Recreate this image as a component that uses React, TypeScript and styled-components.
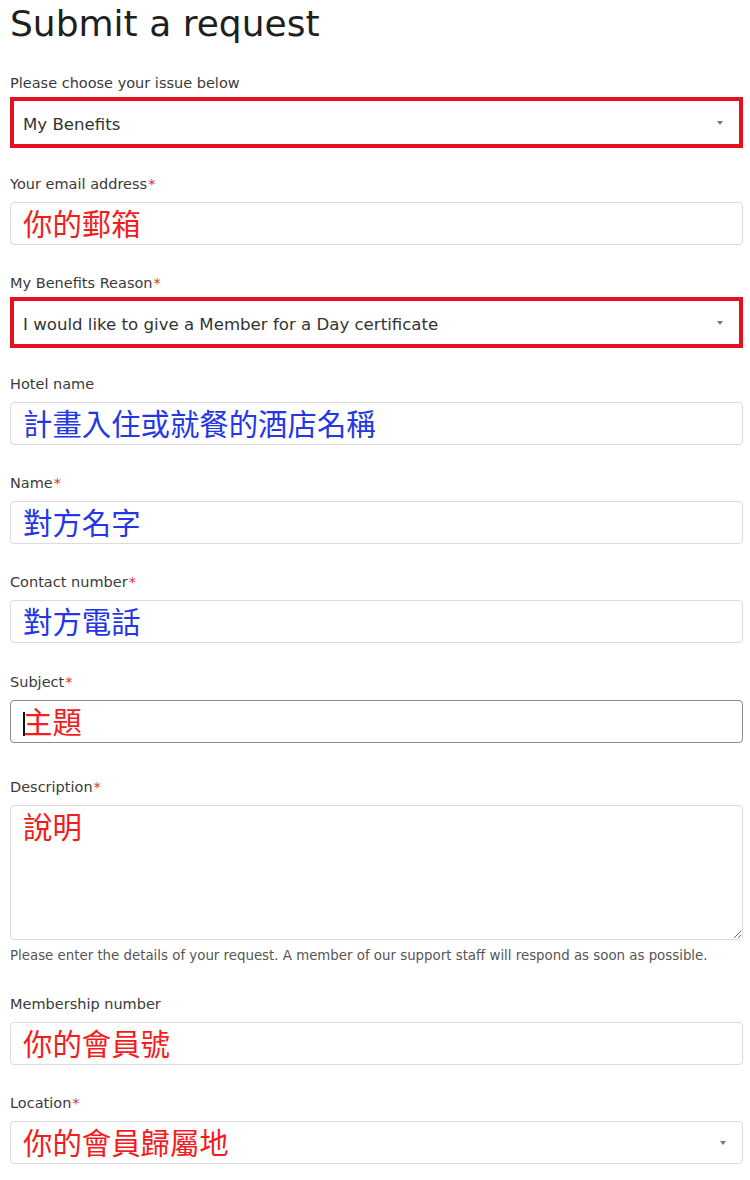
import styled, { createGlobalStyle } from "styled-components";

const GlobalStyle = createGlobalStyle`
  html, body {
    margin: 0;
    padding: 0;
    background: #ffffff;
  }
  body {
    font-family: "DejaVu Sans", "Noto Sans", sans-serif;
    color: #2b2b2b;
  }
`;

type Tone = "red" | "blue" | "plain";

type FieldData = {
  id: number;
  label: string;
  required?: boolean;
  value: string;
  tone: Tone;
  kind: "input" | "select" | "textarea";
  marked?: boolean;
  focused?: boolean;
  hint?: string;
  after?: number;
};

const fields: FieldData[] = [
  { id: 1, label: "Please choose your issue below", value: "My Benefits", tone: "plain", kind: "select", marked: true, after: 30 },
  { id: 2, label: "Your email address", required: true, value: "你的郵箱", tone: "red", kind: "input" },
  {
    id: 3,
    label: "My Benefits Reason",
    required: true,
    value: "I would like to give a Member for a Day certificate",
    tone: "plain",
    kind: "select",
    marked: true,
    after: 30,
  },
  { id: 4, label: "Hotel name", value: "計畫入住或就餐的酒店名稱", tone: "blue", kind: "input" },
  { id: 5, label: "Name", required: true, value: "對方名字", tone: "blue", kind: "input" },
  { id: 6, label: "Contact number", required: true, value: "對方電話", tone: "blue", kind: "input", after: 29 },
  { id: 7, label: "Subject", required: true, value: "主題", tone: "red", kind: "input", focused: true, after: 34 },
  {
    id: 8,
    label: "Description",
    required: true,
    value: "說明",
    tone: "red",
    kind: "textarea",
    hint: "Please enter the details of your request. A member of our support staff will respond as soon as possible.",
    after: 29,
  },
  { id: 9, label: "Membership number", value: "你的會員號", tone: "red", kind: "input" },
  { id: 10, label: "Location", required: true, value: "你的會員歸屬地", tone: "red", kind: "select" },
];

export default function App() {
  return (
    <>
      <GlobalStyle />
      <Page>
        <Title>Submit a request</Title>
        <Form>
          {fields.map((field) => (
            <Field key={field.id} $after={field.after ?? 28}>
              <Label>
                {field.label}
                {field.required && <Star>*</Star>}
              </Label>
              {field.kind === "textarea" ? (
                <TextArea $tone={field.tone} defaultValue={field.value} readOnly />
              ) : (
                <Control $marked={field.marked} $focused={field.focused}>
                  {field.focused && <Caret />}
                  <Value $tone={field.tone}>{field.value}</Value>
                  {field.kind === "select" && <Arrow />}
                </Control>
              )}
              {field.hint && <Hint>{field.hint}</Hint>}
            </Field>
          ))}
        </Form>
      </Page>
    </>
  );
}

const toneColor = (tone: Tone) =>
  tone === "red" ? "#f41c1c" : tone === "blue" ? "#2337e6" : "#333333";

const Page = styled.div`
  padding: 0 7px 20px 10px;
`;

const Title = styled.h1`
  margin: 0;
  padding-top: 2px;
  font-size: 36px;
  line-height: 44px;
  font-weight: 400;
  color: #1f1f1f;
`;

const Form = styled.div`
  display: flex;
  flex-direction: column;
  margin-top: 27px;
`;

const Field = styled.div<{ $after: number }>`
  display: flex;
  flex-direction: column;
  gap: 8px;
  margin-bottom: ${(p) => p.$after}px;
`;

const Label = styled.label`
  font-size: 14.5px;
  line-height: 20px;
  color: #3a3a3a;
`;

const Star = styled.span`
  color: #e03030;
  margin-left: 1px;
`;

const Control = styled.div<{ $marked?: boolean; $focused?: boolean }>`
  position: relative;
  box-sizing: border-box;
  display: flex;
  align-items: center;
  height: ${(p) => (p.$marked ? 51 : 43)}px;
  margin: ${(p) => (p.$marked ? "-4px 0" : "0")};
  padding: 0 ${(p) => (p.$marked ? 9 : 12)}px;
  border: ${(p) =>
    p.$marked ? "4px solid #e8101e" : p.$focused ? "1px solid #8a8a8a" : "1px solid #dcdcdc"};
  border-radius: ${(p) => (p.$marked ? 0 : 4)}px;
  background: #ffffff;
`;

const Value = styled.span<{ $tone: Tone }>`
  color: ${(p) => toneColor(p.$tone)};
  font-size: ${(p) => (p.$tone === "plain" ? "16.6px" : "29.4px")};
  margin-top: ${(p) => (p.$tone === "plain" ? 5 : 4)}px;
  font-family: "DejaVu Sans", "Noto Sans CJK TC", sans-serif;
  line-height: 1;
  white-space: nowrap;
`;

const Caret = styled.span`
  display: inline-block;
  width: 2px;
  height: 24px;
  margin-top: 4px;
  background: #111111;
  margin-right: -2px;
`;

const Arrow = styled.span`
  position: absolute;
  right: 16px;
  top: 50%;
  margin-top: -2px;
  width: 0;
  height: 0;
  border-left: 3px solid transparent;
  border-right: 3px solid transparent;
  border-top: 4px solid #777777;
`;

const TextArea = styled.textarea<{ $tone: Tone }>`
  box-sizing: border-box;
  height: 135px;
  width: 100%;
  padding: 4px 12px;
  border: 1px solid #dcdcdc;
  border-radius: 4px;
  font-family: "DejaVu Sans", "Noto Sans CJK TC", sans-serif;
  font-size: 29.4px;
  line-height: 36px;
  color: ${(p) => toneColor(p.$tone)};
  outline: none;
  resize: vertical;
`;

const Hint = styled.p`
  margin: -1px 0 0;
  font-size: 13.35px;
  line-height: 18px;
  color: #555555;
`;
